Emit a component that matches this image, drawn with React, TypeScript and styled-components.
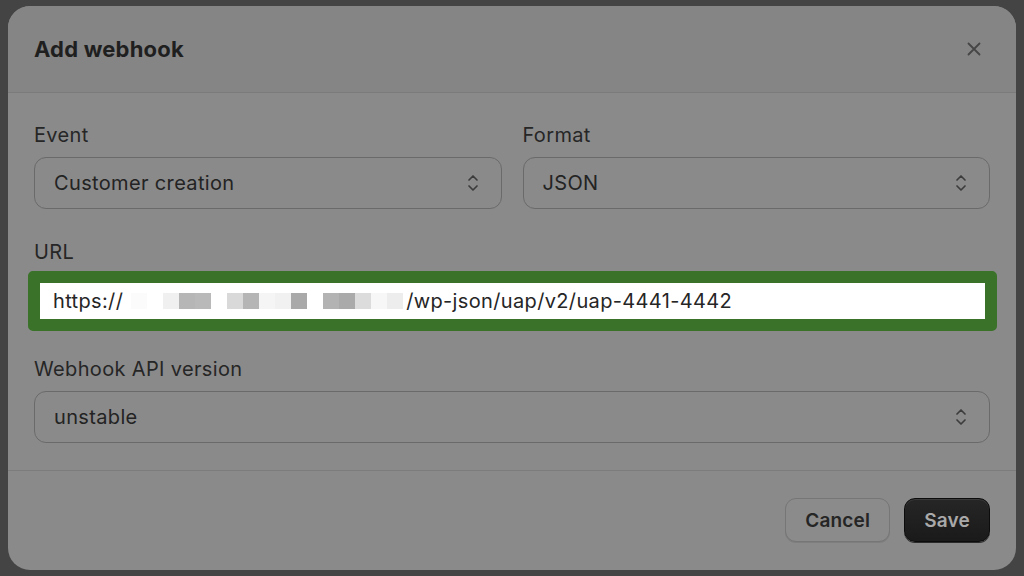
import React from "react";
import styled, { createGlobalStyle } from "styled-components";

const GlobalStyle = createGlobalStyle`
  html, body {
    margin: 0;
    padding: 0;
    background: #444444;
    font-family: Inter, "Noto Sans", "Liberation Sans", sans-serif;
  }
  * { box-sizing: border-box; }
`;

const Backdrop = styled.div`
  width: 1024px;
  height: 576px;
  padding: 6px 8px 6px 8px;
  background: #444444;
  overflow: hidden;
`;

const Modal = styled.div`
  height: 564px;
  background: #8a8a8a;
  border-radius: 22px;
  overflow: hidden;
  display: flex;
  flex-direction: column;
`;

const Header = styled.div`
  height: 87px;
  flex: none;
  display: flex;
  align-items: center;
  justify-content: space-between;
  padding: 0 34px 0 26px;
  background: #858585;
  border-bottom: 1px solid #7b7b7b;
`;

const Title = styled.h2`
  margin: 0;
  font-size: 22px;
  font-weight: 700;
  color: #1f1f1f;
  letter-spacing: 0.2px;
`;

const CloseButton = styled.button`
  border: 0;
  background: none;
  padding: 0;
  width: 16px;
  height: 16px;
  display: flex;
  align-items: center;
  justify-content: center;
  cursor: pointer;
`;

const Body = styled.div`
  padding: 30px 26px 27px 26px;
  display: flex;
  flex-direction: column;
  border-bottom: 1px solid #7c7c7c;
`;

const Row = styled.div`
  display: grid;
  grid-template-columns: 1fr 1fr;
  gap: 21px;
`;

const Field = styled.div<{ $tight?: boolean; $space?: number }>`
  display: flex;
  flex-direction: column;
  gap: ${(p) => (p.$tight ? "7px" : "10px")};
  margin-top: ${(p) => p.$space ?? 0}px;
`;

const Label = styled.label`
  font-size: 20px;
  line-height: 24px;
  letter-spacing: 0.35px;
  color: #262626;
`;

const SelectBox = styled.div`
  height: 52px;
  border: 1px solid #6a6a6a;
  border-radius: 12px;
  display: flex;
  align-items: center;
  justify-content: space-between;
  padding: 0 22px 0 19px;
  font-size: 20px;
  letter-spacing: 0.35px;
  color: #232323;
`;

const UrlHighlight = styled.div`
  margin: 0 -7px 0 -6px;
  border: 12px solid #3a7229;
  border-radius: 5px;
  height: 60px;
  background: #ffffff;
`;

const UrlInput = styled.div`
  height: 100%;
  display: flex;
  align-items: center;
  padding-left: 13px;
  font-size: 20px;
  letter-spacing: 0.35px;
  color: #262626;
  white-space: nowrap;
`;

const Redacted = styled.span`
  display: inline-flex;
  margin: 0 3px 0 8px;
`;

const Pixel = styled.span<{ $shade: string }>`
  width: 16px;
  height: 16px;
  background: ${(p) => p.$shade};
`;

const Footer = styled.div`
  flex: 1;
  display: flex;
  justify-content: flex-end;
  align-items: flex-start;
  gap: 14px;
  padding: 27px 26px 0 0;
`;

const Button = styled.button<{ $primary?: boolean }>`
  height: 44px;
  padding: 0 19px;
  border-radius: 11px;
  font-family: inherit;
  font-size: 19px;
  font-weight: 600;
  letter-spacing: 0.2px;
  cursor: pointer;
  border: 1px solid ${(p) => (p.$primary ? "#0c0c0c" : "#767676")};
  background: ${(p) =>
    p.$primary ? "linear-gradient(#262626, #1a1a1a)" : "#8b8b8b"};
  color: ${(p) => (p.$primary ? "#a9a9a9" : "#252525")};
  box-shadow: ${(p) =>
    p.$primary ? "inset 0 1px 0 #3a3a3a, 0 1px 0 #2a2a2a" : "0 1px 0 #7e7e7e"};
`;

const Chevrons = () => (
  <svg width="12" height="20" viewBox="0 0 12 20" fill="none">
    <polyline
      points="2,7 6,3 10,7"
      stroke="#3c3c3c"
      strokeWidth="1.7"
      strokeLinecap="round"
      strokeLinejoin="round"
    />
    <polyline
      points="2,13 6,17 10,13"
      stroke="#3c3c3c"
      strokeWidth="1.7"
      strokeLinecap="round"
      strokeLinejoin="round"
    />
  </svg>
);

const CloseIcon = () => (
  <svg width="14" height="14" viewBox="0 0 14 14" fill="none">
    <path
      d="M1.5 1.5 L12.5 12.5 M12.5 1.5 L1.5 12.5"
      stroke="#464646"
      strokeWidth="1.8"
      strokeLinecap="round"
    />
  </svg>
);

const shades = [
  "#fbfbfb",
  "#ffffff",
  "#f0f0f0",
  "#b6b6b6",
  "#b9b9b9",
  "#ffffff",
  "#d9d9d9",
  "#b5b5b5",
  "#f5f5f5",
  "#f1f1f1",
  "#a9a9a9",
  "#ffffff",
  "#b3b3b3",
  "#aaaaaa",
  "#dcdcdc",
  "#f7f7f7",
  "#ededed",
];

const Select = ({ value }: { value: string }) => (
  <SelectBox>
    <span>{value}</span>
    <Chevrons />
  </SelectBox>
);

const App = () => {
  return (
    <>
      <GlobalStyle />
      <Backdrop>
        <Modal>
          <Header>
            <Title>Add webhook</Title>
            <CloseButton aria-label="Close">
              <CloseIcon />
            </CloseButton>
          </Header>
          <Body>
            <Row>
              <Field>
                <Label>Event</Label>
                <Select value="Customer creation" />
              </Field>
              <Field>
                <Label>Format</Label>
                <Select value="JSON" />
              </Field>
            </Row>
            <Field $tight $space={31}>
              <Label>URL</Label>
              <UrlHighlight>
                <UrlInput>
                  https://
                  <Redacted>
                    {shades.map((s, i) => (
                      <Pixel key={i} $shade={s} />
                    ))}
                  </Redacted>
                  /wp-json/uap/v2/uap-4441-4442
                </UrlInput>
              </UrlHighlight>
            </Field>
            <Field $space={26}>
              <Label>Webhook API version</Label>
              <Select value="unstable" />
            </Field>
          </Body>
          <Footer>
            <Button>Cancel</Button>
            <Button $primary>Save</Button>
          </Footer>
        </Modal>
      </Backdrop>
    </>
  );
};

export default App;
